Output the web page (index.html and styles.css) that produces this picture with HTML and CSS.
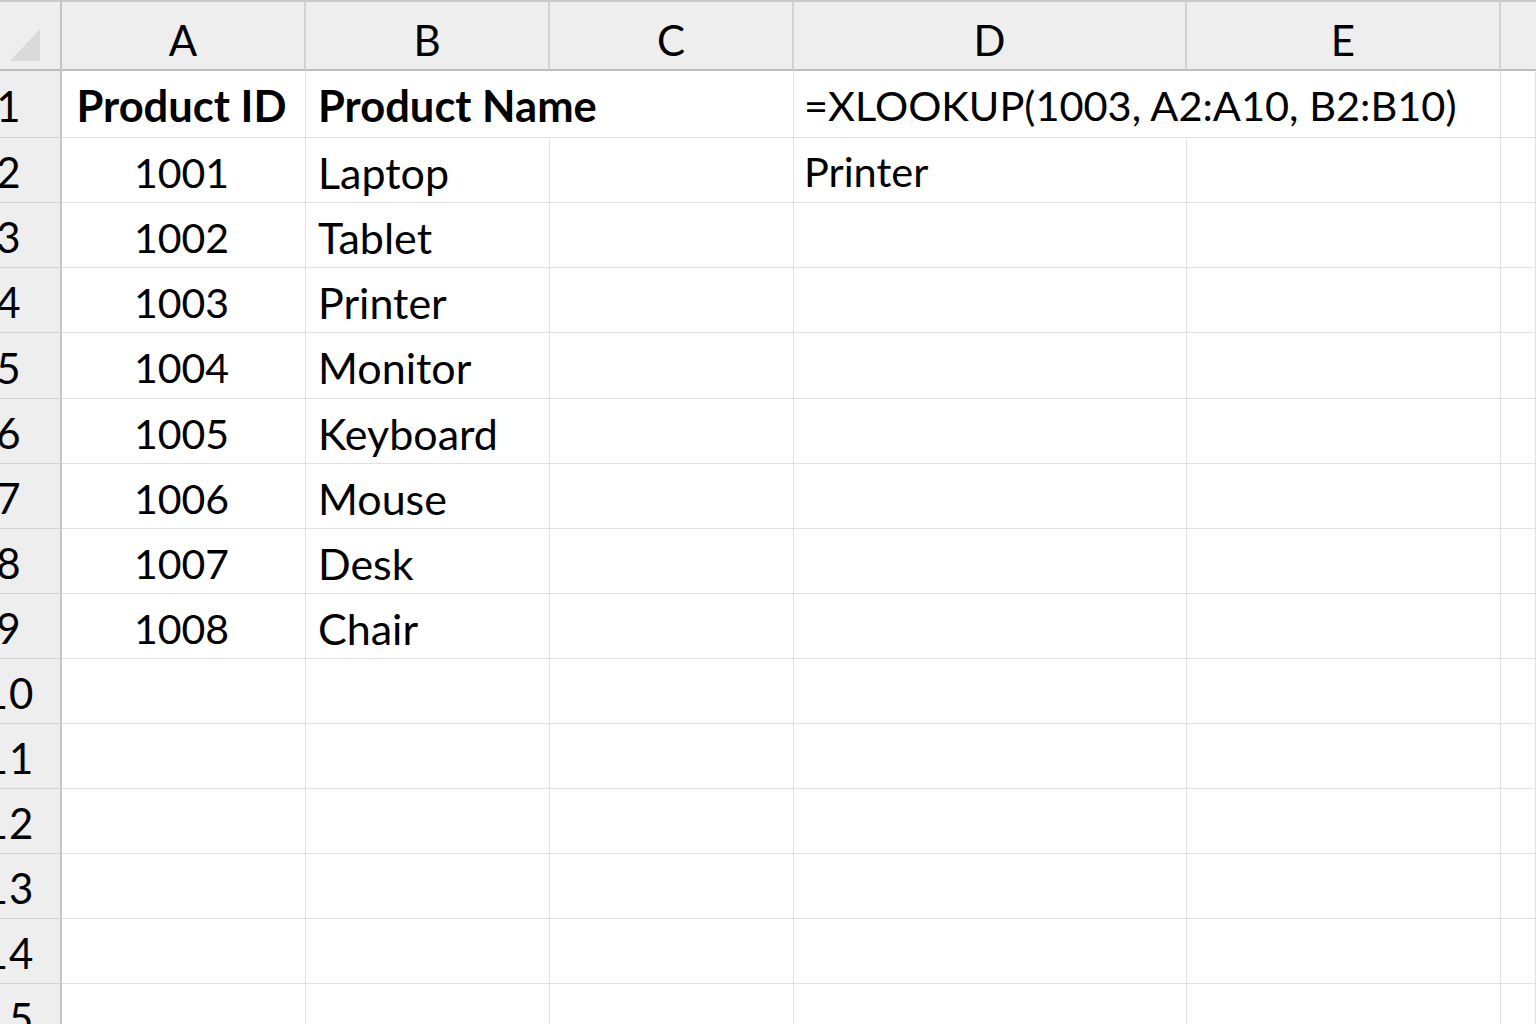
FILE: index.html
```html
<!DOCTYPE html>
<html lang="en">
<head>
<meta charset="utf-8">
<title>XLOOKUP</title>
<link rel="stylesheet" href="styles.css">
</head>
<body>
<div class="sheet">
  <div class="corner"><span class="tri"></span></div>
  <div class="colhdr">A</div>
  <div class="colhdr">B</div>
  <div class="colhdr">C</div>
  <div class="colhdr">D</div>
  <div class="colhdr">E</div>
  <div class="colhdr last"></div>

  <div class="rowhdr"><span>1</span></div>
  <div class="cell num bold">Product ID</div>
  <div class="cell span2 bold">Product Name</div>
  <div class="cell span2 formula">=XLOOKUP(1003, A2:A10, B2:B10)</div>
  <div class="cell"></div>

  <div class="rowhdr"><span>2</span></div>
  <div class="cell num">1001</div>
  <div class="cell">Laptop</div>
  <div class="cell"></div>
  <div class="cell formula">Printer</div>
  <div class="cell"></div>
  <div class="cell"></div>

  <div class="rowhdr"><span>3</span></div>
  <div class="cell num">1002</div>
  <div class="cell">Tablet</div>
  <div class="cell"></div><div class="cell"></div><div class="cell"></div><div class="cell"></div>

  <div class="rowhdr"><span>4</span></div>
  <div class="cell num">1003</div>
  <div class="cell">Printer</div>
  <div class="cell"></div><div class="cell"></div><div class="cell"></div><div class="cell"></div>

  <div class="rowhdr"><span>5</span></div>
  <div class="cell num">1004</div>
  <div class="cell">Monitor</div>
  <div class="cell"></div><div class="cell"></div><div class="cell"></div><div class="cell"></div>

  <div class="rowhdr"><span>6</span></div>
  <div class="cell num">1005</div>
  <div class="cell">Keyboard</div>
  <div class="cell"></div><div class="cell"></div><div class="cell"></div><div class="cell"></div>

  <div class="rowhdr"><span>7</span></div>
  <div class="cell num">1006</div>
  <div class="cell">Mouse</div>
  <div class="cell"></div><div class="cell"></div><div class="cell"></div><div class="cell"></div>

  <div class="rowhdr"><span>8</span></div>
  <div class="cell num">1007</div>
  <div class="cell">Desk</div>
  <div class="cell"></div><div class="cell"></div><div class="cell"></div><div class="cell"></div>

  <div class="rowhdr"><span>9</span></div>
  <div class="cell num">1008</div>
  <div class="cell">Chair</div>
  <div class="cell"></div><div class="cell"></div><div class="cell"></div><div class="cell"></div>

  <div class="rowhdr"><span>10</span></div>
  <div class="cell"></div><div class="cell"></div><div class="cell"></div><div class="cell"></div><div class="cell"></div><div class="cell"></div>

  <div class="rowhdr"><span>11</span></div>
  <div class="cell"></div><div class="cell"></div><div class="cell"></div><div class="cell"></div><div class="cell"></div><div class="cell"></div>

  <div class="rowhdr"><span>12</span></div>
  <div class="cell"></div><div class="cell"></div><div class="cell"></div><div class="cell"></div><div class="cell"></div><div class="cell"></div>

  <div class="rowhdr"><span>13</span></div>
  <div class="cell"></div><div class="cell"></div><div class="cell"></div><div class="cell"></div><div class="cell"></div><div class="cell"></div>

  <div class="rowhdr"><span>14</span></div>
  <div class="cell"></div><div class="cell"></div><div class="cell"></div><div class="cell"></div><div class="cell"></div><div class="cell"></div>

  <div class="rowhdr"><span>15</span></div>
  <div class="cell"></div><div class="cell"></div><div class="cell"></div><div class="cell"></div><div class="cell"></div><div class="cell"></div>
</div>
</body>
</html>
```

FILE: styles.css
```css
* { box-sizing: border-box; }
html, body {
  margin: 0;
  padding: 0;
  background: #ffffff;
  overflow: hidden;
  height: 1024px;
}
body {
  font-family: Lato, "Open Sans", sans-serif;
  font-size: 41px;
  color: #000;
}
.sheet {
  display: grid;
  grid-template-columns: 62px 244px 244px 244px 393px 314px 1fr;
  grid-template-rows: 71px 67px 65px 65px 65px 66px repeat(11, 65px);
  width: 1536px;
  height: 1024px;
  overflow: hidden;
}
.corner, .colhdr {
  background: #eeeeee;
  border-top: 2px solid #c9c9c9;
  border-bottom: 2px solid #bebebe;
  border-right: 2px solid #d2d2d2;
}
.corner {
  display: flex;
  align-items: flex-end;
  padding: 0 0 8px 10px;
  border-right: 2px solid #c4c4c4;
}
.tri {
  width: 30px;
  height: 32px;
  background: #dadada;
  clip-path: polygon(100% 0, 100% 100%, 0 100%);
}
.colhdr {
  display: flex;
  align-items: center;
  justify-content: center;
  padding-top: 9px;
  line-height: 1;
  font-size: 42px;
}
.colhdr.last { border-right: none; }
.rowhdr {
  background: #eeeeee;
  border-right: 2px solid #c4c4c4;
  border-bottom: 1px solid #d2d2d2;
  overflow: hidden;
  display: flex;
  align-items: center;
  padding-top: 4px;
}
.rowhdr span {
  flex: none;
  width: 100px;
  margin-left: -41px;
  text-align: center;
  line-height: 1;
  font-size: 42px;
  letter-spacing: 1px;
}
.cell {
  border-right: 1px solid #e1e1e1;
  border-bottom: 1px solid #e1e1e1;
  display: flex;
  align-items: center;
  padding: 4px 0 0 12px;
  white-space: nowrap;
  line-height: 1;
  font-size: 43px;
}
.cell.num {
  justify-content: center;
  padding-left: 0;
  padding-right: 4px;
  font-size: 41px;
}
.cell.bold {
  font-weight: 700;
  font-size: 43.5px;
}
.cell.span2 { grid-column: span 2; }
.cell.formula {
  padding-left: 10px;
  font-size: 41.5px;
}
```
